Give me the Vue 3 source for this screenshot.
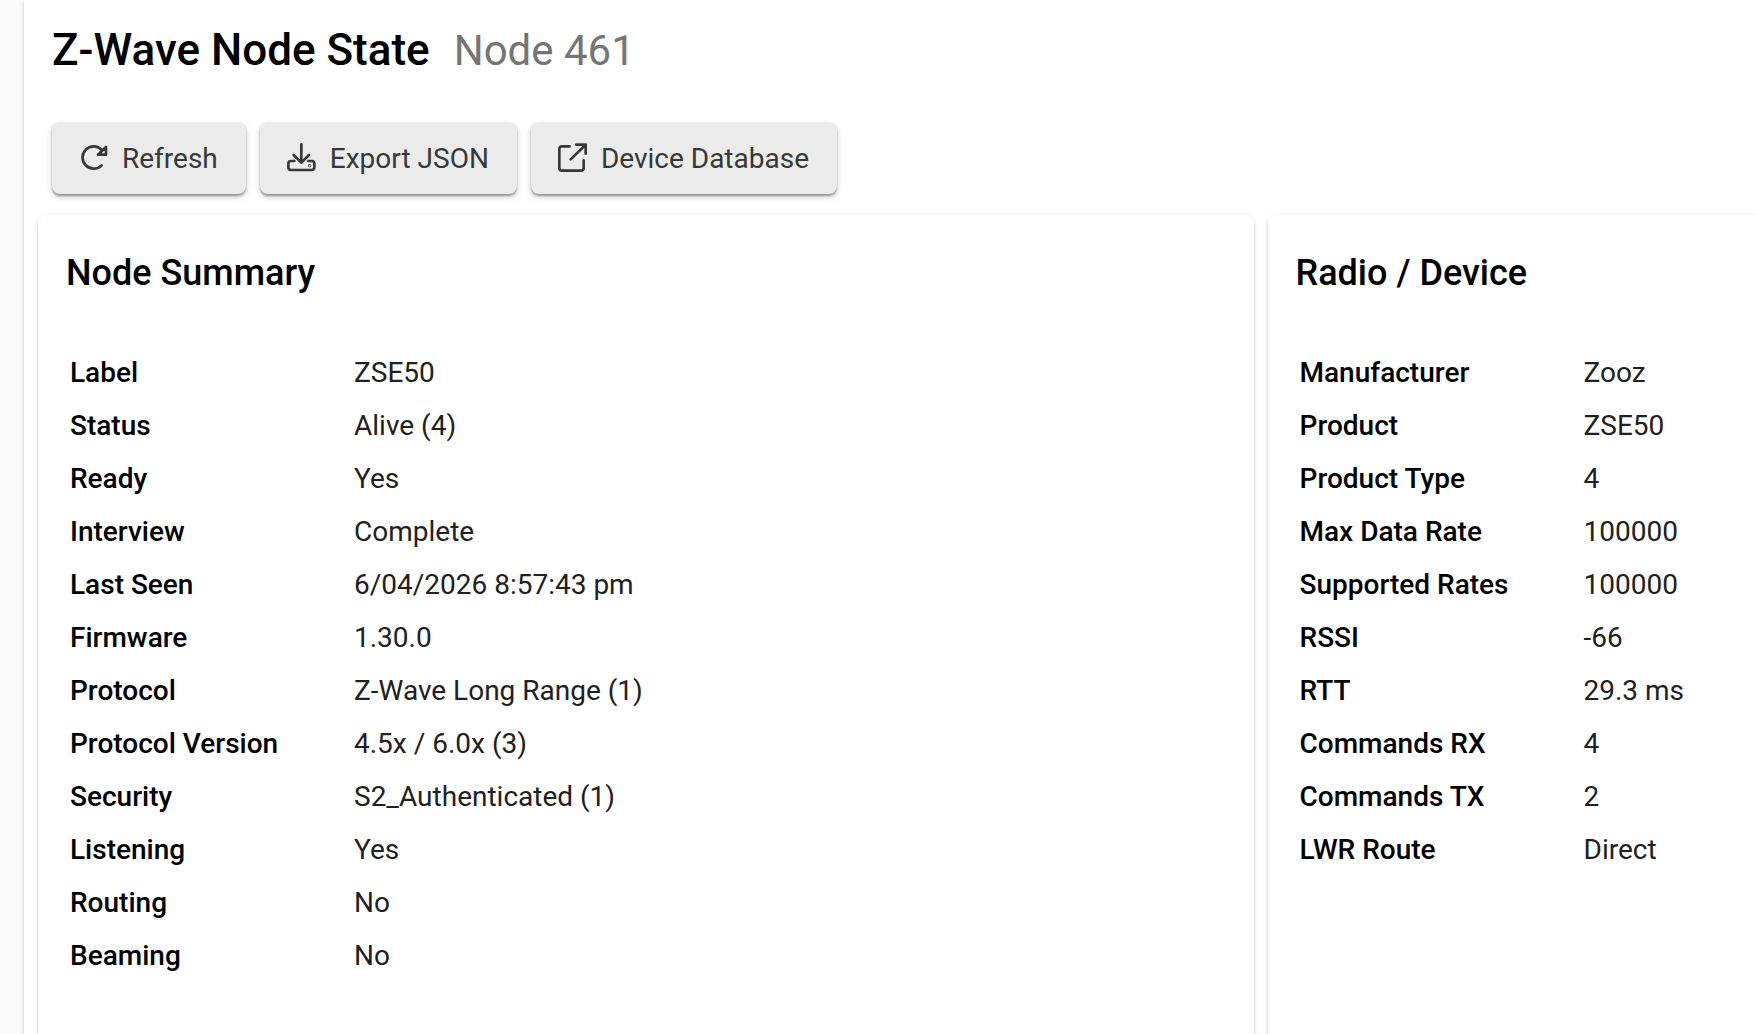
<script setup>
const summary = [
  ['Label', 'ZSE50'],
  ['Status', 'Alive (4)'],
  ['Ready', 'Yes'],
  ['Interview', 'Complete'],
  ['Last Seen', '6/04/2026 8:57:43 pm'],
  ['Firmware', '1.30.0'],
  ['Protocol', 'Z-Wave Long Range (1)'],
  ['Protocol Version', '4.5x / 6.0x (3)'],
  ['Security', 'S2_Authenticated (1)'],
  ['Listening', 'Yes'],
  ['Routing', 'No'],
  ['Beaming', 'No'],
]

const radio = [
  ['Manufacturer', 'Zooz'],
  ['Product', 'ZSE50'],
  ['Product Type', '4'],
  ['Max Data Rate', '100000'],
  ['Supported Rates', '100000'],
  ['RSSI', '-66'],
  ['RTT', '29.3 ms'],
  ['Commands RX', '4'],
  ['Commands TX', '2'],
  ['LWR Route', 'Direct'],
]

const cards = [
  { title: 'Node Summary', rows: summary },
  { title: 'Radio / Device', rows: radio },
]
</script>

<template>
  <div class="page">
    <main class="panel">
      <header class="heading">
        <h1>Z-Wave Node State</h1>
        <span class="node">Node 461</span>
      </header>

      <div class="actions">
        <button type="button">
          <svg viewBox="0 0 84 84" aria-hidden="true">
            <path d="M66 18A33.5 33.5 0 1 0 65 64" />
            <path d="M78 9V32H54Z" />
          </svg>
          Refresh
        </button>
        <button type="button">
          <svg viewBox="0 0 84 84" aria-hidden="true">
            <path d="M40 1V56M17 33L40 56L63 33" />
            <path d="M19 51H9Q1 51 1 59V70Q1 78 9 78H71Q79 78 79 70V59Q79 51 71 51H61" />
            <circle cx="65" cy="65" r="1" />
          </svg>
          Export JSON
        </button>
        <button type="button">
          <svg viewBox="0 0 84 84" aria-hidden="true">
            <path d="M32 7H9Q1 7 1 15V72Q1 80 9 80H66Q74 80 74 72V49" />
            <path d="M35 46L79 3M52 2H80V29" />
          </svg>
          Device Database
        </button>
      </div>

      <div class="cards">
        <section v-for="card in cards" :key="card.title" class="card">
          <h2>{{ card.title }}</h2>
          <table>
            <tbody>
              <tr v-for="[name, value] in card.rows" :key="name">
                <th scope="row">{{ name }}</th>
                <td>{{ value }}</td>
              </tr>
            </tbody>
          </table>
        </section>
      </div>
    </main>
  </div>
</template>

<style>
body {
  margin: 0;
  background: #fafafa;
}
</style>

<style scoped>
.page {
  display: flex;
  height: 100vh;
  overflow: hidden;
  padding-left: 24px;
  box-sizing: border-box;
  background: #fafafa;
  color: #212121;
  font-family: Roboto, "Liberation Sans", sans-serif;
  font-size: 28px;
}

.panel {
  flex: 1;
  min-width: 0;
  display: flex;
  flex-direction: column;
  background: #fff;
  box-shadow: 0 2px 4px rgba(0, 0, 0, 0.2), 0 0 2px rgba(0, 0, 0, 0.06);
}

.heading {
  display: flex;
  align-items: baseline;
  gap: 24px;
  padding: 21px 28px 42px;
  line-height: 58px;
}

h1,
h2 {
  margin: 0;
  color: #000;
  font-weight: 500;
}

h1 {
  font-size: 44px;
}

.node {
  color: #757575;
  font-size: 42px;
}

.actions {
  display: flex;
  gap: 14px;
  padding: 0 28px;
}

button {
  display: flex;
  align-items: center;
  gap: 14px;
  height: 72px;
  padding: 0 28px;
  border: 0;
  border-radius: 8px;
  background: #ebebeb;
  box-shadow: 0 2px 2px rgba(0, 0, 0, 0.3), 0 3px 6px rgba(0, 0, 0, 0.2);
  color: #383838;
  font: inherit;
  white-space: nowrap;
  cursor: pointer;
}

svg {
  width: 28px;
  height: 28px;
  overflow: visible;
  fill: none;
  stroke: currentColor;
  stroke-width: 8;
  stroke-linecap: round;
  stroke-linejoin: round;
}

.cards {
  flex: 1;
  display: grid;
  grid-template-columns: minmax(0, 107fr) minmax(0, 43fr);
  gap: 14px;
  padding: 21px 0 0 14px;
}

.card {
  padding: 28px;
  border-radius: 8px 8px 0 0;
  background: #fff;
  box-shadow: 0 2px 4px rgba(0, 0, 0, 0.2), 0 0 2px rgba(0, 0, 0, 0.04);
}

.card:last-child {
  border-top-right-radius: 0;
}

h2 {
  margin-bottom: 43px;
  font-size: 36px;
  line-height: 60px;
}

table {
  border-collapse: collapse;
}

th,
td {
  height: 53px;
  padding: 0 0 0 4px;
  text-align: left;
  white-space: nowrap;
}

th {
  width: 280px;
  color: #000;
  font-weight: 500;
}

td {
  font-weight: 400;
}
</style>
